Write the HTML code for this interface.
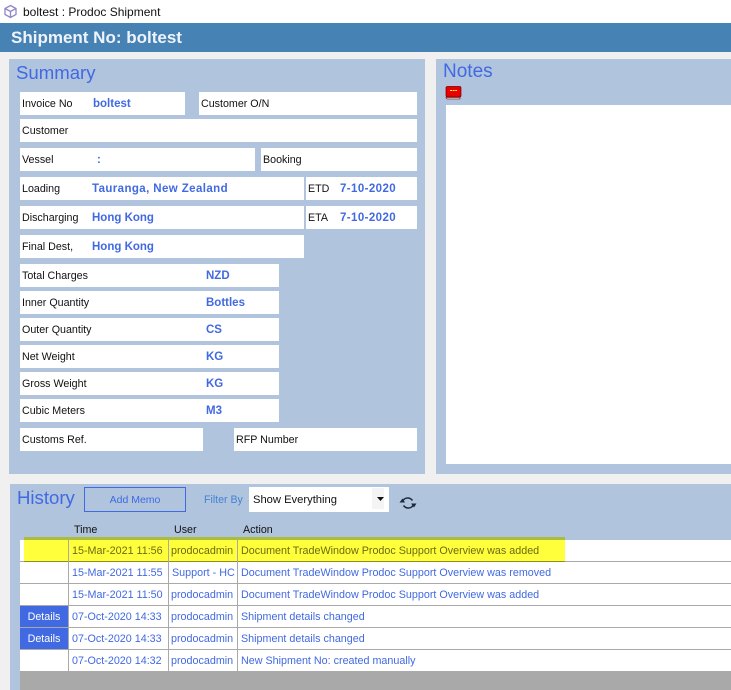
<!DOCTYPE html>
<html><head><meta charset="utf-8">
<style>
html,body{margin:0;padding:0}
body{width:731px;height:690px;overflow:hidden;background:#f0f0f0;position:relative;font-family:"Liberation Sans",sans-serif;font-size:12px;color:#000}
div,span,svg{position:absolute;box-sizing:border-box;white-space:nowrap}
.p{background:#b0c4de}
.h{font-size:18.6px;color:#4169e1;line-height:24px}
.f{background:#fff;height:23px;line-height:25px;padding-left:2px;font-size:10.7px;color:#111}
.v{font-weight:bold;color:#4169e1;top:0;font-size:11.5px;letter-spacing:.4px}
.n{letter-spacing:0}
.t{font-size:10.75px;color:#4169e1;line-height:23px;height:22px}
.th{font-size:10.7px;color:#111;top:522px;line-height:16px}
.vl{width:1px;top:540px;height:131px;background:#a9a9a9}
</style></head><body>
<div style="left:0;top:0;width:731px;height:23px;background:#fff"></div>
<svg style="left:3px;top:4px" width="15" height="15" viewBox="0 0 15 15" fill="none" stroke="#8f86c9" stroke-width="1.3"><path d="M7.5 1.5 13 4.5v6l-5.500 3-5.500-3v-6zM2 4.500l5.500 3 5.500-3M7.500 7.500v6"/></svg>
<div style="left:23px;top:4px;font-size:12px;line-height:16px;color:#111">boltest : Prodoc Shipment</div>
<div style="left:0;top:23px;width:731px;height:29px;background:#4682b4"></div>
<div style="left:11px;top:27px;font-size:17px;font-weight:bold;color:#f0f4fa;line-height:22px">Shipment No: boltest</div>

<div class="p" style="left:9px;top:59px;width:416px;height:415px"></div>
<div class="p" style="left:436px;top:59px;width:295px;height:415px"></div>
<div class="p" style="left:10px;top:484px;width:721px;height:206px"></div>

<div class="h" style="left:16px;top:61px">Summary</div>
<div class="h" style="left:443px;top:60px;font-size:19px">Notes</div>
<svg style="left:445px;top:86px" width="17" height="14" viewBox="0 0 17 14"><rect x="1" y="0.500" width="15" height="10.500" rx="1.500" fill="#e80000" stroke="#700" stroke-width=".7"/><path d="M1 11.500h14v1.500H2z" fill="#ddd" stroke="#600" stroke-width=".6"/><path d="M5 4.500h7" stroke="#ff0" stroke-width="1" stroke-dasharray="2 .6"/></svg>
<div style="left:446px;top:105px;width:285px;height:359px;background:#fff"></div>

<div class="f" style="left:20px;top:92px;width:165px">Invoice No<span class="v n" style="left:73px">boltest</span></div>
<div class="f" style="left:199px;top:92px;width:218px">Customer O/N</div>
<div class="f" style="left:20px;top:119px;width:397px">Customer</div>
<div class="f" style="left:20px;top:148px;width:235px">Vessel<span class="v" style="left:77px">:</span></div>
<div class="f" style="left:261px;top:148px;width:156px">Booking</div>
<div class="f" style="left:20px;top:177px;width:284px">Loading<span class="v" style="left:72px">Tauranga, New Zealand</span></div>
<div class="f" style="left:306px;top:177px;width:111px">ETD<span class="v" style="left:34px">7-10-2020</span></div>
<div class="f" style="left:20px;top:206px;width:284px">Discharging<span class="v n" style="left:72px">Hong Kong</span></div>
<div class="f" style="left:306px;top:206px;width:111px">ETA<span class="v" style="left:34px">7-10-2020</span></div>
<div class="f" style="left:20px;top:235px;width:284px">Final Dest,<span class="v n" style="left:72px">Hong Kong</span></div>
<div class="f" style="left:20px;top:264px;width:259px">Total Charges<span class="v n" style="left:186px">NZD</span></div>
<div class="f" style="left:20px;top:291px;width:259px">Inner Quantity<span class="v n" style="left:186px">Bottles</span></div>
<div class="f" style="left:20px;top:318px;width:259px">Outer Quantity<span class="v n" style="left:186px">CS</span></div>
<div class="f" style="left:20px;top:345px;width:259px">Net Weight<span class="v n" style="left:186px">KG</span></div>
<div class="f" style="left:20px;top:372px;width:259px">Gross Weight<span class="v n" style="left:186px">KG</span></div>
<div class="f" style="left:20px;top:399px;width:259px">Cubic Meters<span class="v n" style="left:186px">M3</span></div>
<div class="f" style="left:20px;top:428px;width:183px">Customs Ref.</div>
<div class="f" style="left:234px;top:428px;width:183px">RFP Number</div>

<div class="h" style="left:17px;top:486px">History</div>
<div style="left:84px;top:487px;width:102px;height:25px;border:1px solid #4169e1;text-align:center;line-height:24px;font-size:10.500px;color:#4169e1">Add Memo</div>
<div style="left:204px;top:492px;font-size:10.600px;line-height:16px;color:#4682d4">Filter By</div>
<div style="left:249px;top:487px;width:140px;height:25px;background:#fff;line-height:26px;padding-left:4px;font-size:11.200px;color:#111">Show Everything</div>
<div style="left:372px;top:488px;width:12px;height:21px;background:#f4f4f4"></div>
<svg style="left:377px;top:497px" width="7" height="4" viewBox="0 0 7 4"><path d="M0 0h7L3.500 4z" fill="#111"/></svg>
<svg style="left:399px;top:494px" width="18" height="18" viewBox="0 0 18 18" fill="none" stroke="#1c2a3a" stroke-width="1.500"><path d="M3.500 8C4.500 3.500 10.500 2.500 13.500 6.500M14.500 10C13.500 14.500 7.500 15.500 4.500 11.500"/><path d="M0.500 8.500h5.500L3.500 4.500zM12 9.500h5.500L15 13.500z" fill="#1c2a3a" stroke="none"/></svg>

<div class="th" style="left:74px">Time</div>
<div class="th" style="left:174px">User</div>
<div class="th" style="left:243px">Action</div>

<div style="left:20px;top:540px;width:711px;height:131px;background:#fff"></div>
<div style="left:20px;top:606px;width:48px;height:43px;background:#4169e1"></div>
<div style="left:24px;top:537px;width:541px;height:3px;background:#abbd3f"></div>
<div style="left:24px;top:540px;width:541px;height:21px;background:#ffff3c"></div>
<div style="left:20px;top:561px;width:711px;height:1px;background:#a9a9a9"></div>
<div style="left:24px;top:561px;width:541px;height:1px;background:#8f8f20"></div>
<div style="left:20px;top:583px;width:711px;height:1px;background:#a9a9a9"></div>
<div style="left:20px;top:605px;width:711px;height:1px;background:#a9a9a9"></div>
<div style="left:20px;top:627px;width:711px;height:1px;background:#a9a9a9"></div>
<div style="left:20px;top:649px;width:711px;height:1px;background:#a9a9a9"></div>
<div class="vl" style="left:68px"></div>
<div class="vl" style="left:168px"></div>
<div class="vl" style="left:237px"></div>
<div style="left:20px;top:671px;width:711px;height:19px;background:#a9a9a9"></div>

<div class="t" style="left:72px;top:540px;color:#6b6b10">15-Mar-2021 11:56</div>
<div class="t" style="left:171px;top:540px;color:#6b6b10">prodocadmin</div>
<div class="t" style="left:241px;top:540px;color:#6b6b10">Document TradeWindow Prodoc Support Overview was added</div>

<div class="t" style="left:72px;top:562px">15-Mar-2021 11:55</div>
<div class="t" style="left:172px;top:562px">Support - HC</div>
<div class="t" style="left:241px;top:562px">Document TradeWindow Prodoc Support Overview was removed</div>

<div class="t" style="left:72px;top:584px">15-Mar-2021 11:50</div>
<div class="t" style="left:171px;top:584px">prodocadmin</div>
<div class="t" style="left:241px;top:584px">Document TradeWindow Prodoc Support Overview was added</div>

<div class="t" style="left:20px;top:606px;width:48px;text-align:center;color:#fff">Details</div>
<div class="t" style="left:72px;top:606px">07-Oct-2020 14:33</div>
<div class="t" style="left:171px;top:606px">prodocadmin</div>
<div class="t" style="left:241px;top:606px">Shipment details changed</div>

<div class="t" style="left:20px;top:628px;width:48px;text-align:center;color:#fff">Details</div>
<div class="t" style="left:72px;top:628px">07-Oct-2020 14:33</div>
<div class="t" style="left:171px;top:628px">prodocadmin</div>
<div class="t" style="left:241px;top:628px">Shipment details changed</div>

<div class="t" style="left:72px;top:650px">07-Oct-2020 14:32</div>
<div class="t" style="left:171px;top:650px">prodocadmin</div>
<div class="t" style="left:241px;top:650px">New Shipment No: created manually</div>
</body></html>
